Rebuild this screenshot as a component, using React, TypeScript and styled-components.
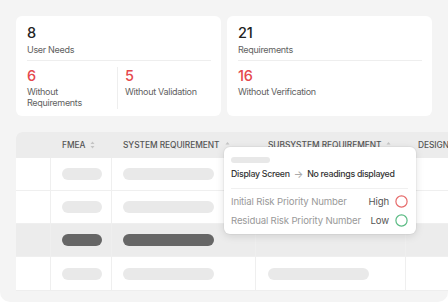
import React from "react";
import styled, { createGlobalStyle } from "styled-components";

const Global = createGlobalStyle`
  html, body { margin: 0; padding: 0; background: #ffffff; }
  body { font-family: Inter, "Noto Sans", sans-serif; -webkit-font-smoothing: antialiased; }
  * { box-sizing: border-box; }
`;

const Panel = styled.div`
  position: relative;
  width: 448px;
  height: 302px;
  background: #f4f4f4;
  border-bottom-left-radius: 10px;
  border-bottom-right-radius: 10px;
  padding: 16px 0 0 16px;
  overflow: hidden;
`;

const Cards = styled.div`
  display: grid;
  grid-template-columns: 205px 205px;
  gap: 6px;
`;

const Card = styled.div`
  background: #fff;
  border-radius: 6px;
  height: 100px;
  padding: 8px 10px 0 11px;
  display: flex;
  flex-direction: column;
`;

const Num = styled.div<{ $red?: boolean }>`
  font-size: 14.5px;
  line-height: 17px;
  font-weight: 500;
  letter-spacing: -0.2px;
  color: ${(p) => (p.$red ? "#e5484d" : "#222")};
`;

const Label = styled.div<{ $gap?: number }>`
  margin-top: ${(p) => p.$gap ?? 2}px;
  font-size: 9px;
  line-height: 11px;
  letter-spacing: -0.3px;
  color: #616161;
`;

const Divider = styled.div`
  height: 1px;
  background: #eeeeee;
  margin-top: 5px;
`;

const Stats = styled.div`
  display: flex;
  padding-top: 6px;
`;

const Stat = styled.div<{ $divider?: boolean; $indent?: boolean; $w?: number }>`
  width: ${(p) => (p.$w ? `${p.$w}px` : "auto")};
  flex: ${(p) => (p.$w ? "none" : "1")};
  padding-left: ${(p) => (p.$indent ? "7px" : "0")};
  padding-right: 4px;
  border-right: ${(p) => (p.$divider ? "1px solid #eeeeee" : "none")};
  min-height: 42px;
`;

const Table = styled.div`
  margin-top: 16px;
  width: 460px;
  background: #fff;
  border-top-left-radius: 6px;
  overflow: hidden;
  border-bottom: 1px solid #eeeeee;
`;

const cols = "35px 61px 144px 150px 70px";

const HeadRow = styled.div`
  display: grid;
  grid-template-columns: ${cols};
  height: 26px;
  background: #ececec;
`;

const HeadCell = styled.div<{ $pl?: number }>`
  display: flex;
  align-items: center;
  gap: 5px;
  padding-left: ${(p) => p.$pl ?? 11}px;
  font-size: 8.4px;
  font-weight: 500;
  letter-spacing: -0.05px;
  color: #555;
  white-space: nowrap;
  overflow: hidden;
`;

const Row = styled.div<{ $hl?: boolean }>`
  display: grid;
  grid-template-columns: ${cols};
  height: 33px;
  background: ${(p) => (p.$hl ? "#ececec" : "#fff")};
  border-bottom: 1px solid #efefef;
  &:last-child { border-bottom: none; }
`;

const Cell = styled.div<{ $pl?: number; $line?: boolean }>`
  display: flex;
  align-items: center;
  padding-left: ${(p) => p.$pl ?? 11}px;
  border-right: ${(p) => (p.$line ? "1px solid #efefef" : "none")};
`;

const Pill = styled.div<{ $w: number; $dark?: boolean }>`
  width: ${(p) => p.$w}px;
  height: 12px;
  border-radius: 6px;
  background: ${(p) => (p.$dark ? "#666666" : "#e9e9e9")};
`;

const Tooltip = styled.div`
  position: absolute;
  left: 224px;
  top: 147px;
  width: 192px;
  height: 87px;
  background: #fff;
  border-radius: 6px;
  box-shadow: 0 2px 8px rgba(0, 0, 0, 0.12), 0 0 0 1px rgba(0, 0, 0, 0.03);
  padding: 10px 8px 0 7px;
  display: flex;
  flex-direction: column;
`;

const TipBar = styled.div`
  width: 39px;
  height: 6px;
  border-radius: 3px;
  background: #e8e8e8;
`;

const TipTitle = styled.div`
  margin-top: 5px;
  display: flex;
  align-items: center;
  gap: 4px;
  font-size: 8.8px;
  line-height: 12px;
  font-weight: 500;
  letter-spacing: -0.3px;
  color: #333;
  white-space: nowrap;
`;

const Arrow = styled.span`
  color: #aaa;
  font-size: 10px;
  letter-spacing: 0;
`;

const TipDivider = styled.div`
  height: 1px;
  background: #f0f0f0;
  margin-top: 8px;
`;

const RiskRow = styled.div<{ $first?: boolean }>`
  display: flex;
  align-items: center;
  height: 19px;
  margin-top: ${(p) => (p.$first ? "3px" : "0")};
  font-size: 9.6px;
  letter-spacing: -0.15px;
  color: #999;
  white-space: nowrap;
`;

const RiskName = styled.span`
  flex: 1;
`;

const RiskLevel = styled.span`
  color: #555;
  margin-right: 6px;
`;

const Ring = ({ color }: { color: string }) => (
  <svg width="13" height="13" viewBox="0 0 13 13">
    <circle cx="6.5" cy="6.5" r="5.6" fill="none" stroke={color} strokeWidth="1.2" />
  </svg>
);

const SortBoth = () => (
  <svg width="5" height="8" viewBox="0 0 5 8">
    <path d="M2.5 0.5 L4.5 3 L0.5 3 Z" fill="#c4c4c4" />
    <path d="M2.5 7.5 L4.5 5 L0.5 5 Z" fill="#c4c4c4" />
  </svg>
);

const SortUp = () => (
  <svg width="5" height="8" viewBox="0 0 5 8">
    <path d="M2.5 1 L4.5 3.5 L0.5 3.5 Z" fill="#c4c4c4" />
  </svg>
);

type RowData = { hl?: boolean; sub?: boolean };
const rows: RowData[] = [{ sub: true }, { sub: true }, { hl: true }, { sub: true }];

export default function App() {
  return (
    <>
      <Global />
      <Panel>
        <Cards>
          <Card>
            <Num>8</Num>
            <Label $gap={3}>User Needs</Label>
            <Divider />
            <Stats>
              <Stat $divider $w={91}>
                <Num $red>6</Num>
                <Label>Without Requirements</Label>
              </Stat>
              <Stat $indent>
                <Num $red>5</Num>
                <Label>Without Validation</Label>
              </Stat>
            </Stats>
          </Card>
          <Card>
            <Num>21</Num>
            <Label $gap={3}>Requirements</Label>
            <Divider />
            <Stats>
              <Stat>
                <Num $red>16</Num>
                <Label>Without Verification</Label>
              </Stat>
            </Stats>
          </Card>
        </Cards>
        <Table>
          <HeadRow>
            <HeadCell />
            <HeadCell>
              FMEA <SortBoth />
            </HeadCell>
            <HeadCell>
              SYSTEM REQUIREMENT <SortUp />
            </HeadCell>
            <HeadCell $pl={12}>
              SUBSYSTEM REQUIREMENT <SortUp />
            </HeadCell>
            <HeadCell $pl={12}>DESIGN OUTPUT</HeadCell>
          </HeadRow>
          {rows.map((r, i) => (
            <Row key={i} $hl={r.hl}>
              <Cell $line />
              <Cell $line>
                <Pill $w={40} $dark={r.hl} />
              </Cell>
              <Cell $line>
                <Pill $w={91} $dark={r.hl} />
              </Cell>
              <Cell $line $pl={12}>
                {r.sub && !r.hl ? <Pill $w={101} /> : null}
              </Cell>
              <Cell />
            </Row>
          ))}
        </Table>
        <Tooltip>
          <TipBar />
          <TipTitle>
            Display Screen <Arrow>→</Arrow> No readings displayed
          </TipTitle>
          <TipDivider />
          <RiskRow $first>
            <RiskName>Initial Risk Priority Number</RiskName>
            <RiskLevel>High</RiskLevel>
            <Ring color="#e66b6b" />
          </RiskRow>
          <RiskRow>
            <RiskName>Residual Risk Priority Number</RiskName>
            <RiskLevel>Low</RiskLevel>
            <Ring color="#5bbb84" />
          </RiskRow>
        </Tooltip>
      </Panel>
    </>
  );
}
